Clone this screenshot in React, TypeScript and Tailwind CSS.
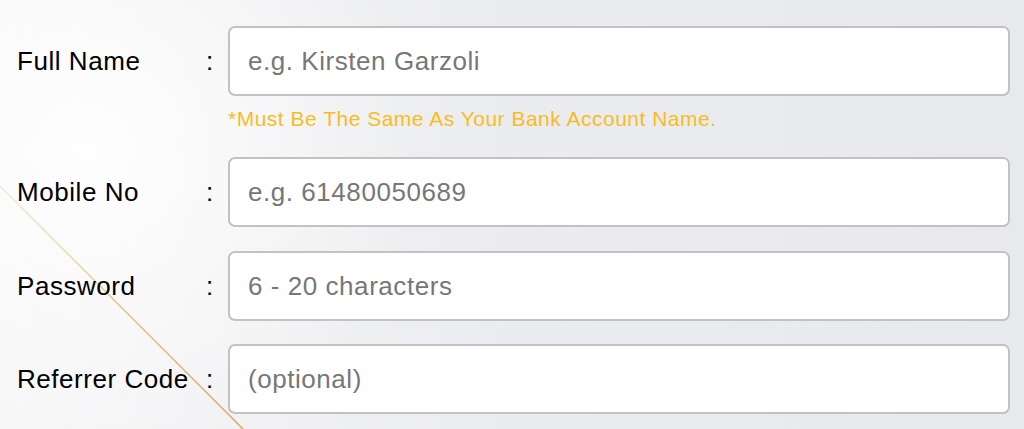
import React from "react";

type Field = { label: string; placeholder: string; type?: string; hint?: string };

const fields: Field[] = [
  {
    label: "Full Name",
    placeholder: "e.g. Kirsten Garzoli",
    hint: "*Must Be The Same As Your Bank Account Name.",
  },
  { label: "Mobile No", placeholder: "e.g. 61480050689" },
  { label: "Password", placeholder: "6 - 20 characters", type: "password" },
  { label: "Referrer Code", placeholder: "(optional)" },
];

function Backdrop() {
  return (
    <svg
      className="pointer-events-none absolute inset-0 h-full w-full"
      viewBox="0 0 1024 429"
      preserveAspectRatio="none"
    >
      <defs>
        <linearGradient id="gold" x1="0" y1="185" x2="245" y2="429" gradientUnits="userSpaceOnUse">
          <stop offset="0" stopColor="#efe3c4" stopOpacity="0.6" />
          <stop offset="0.5" stopColor="#e2c690" />
          <stop offset="1" stopColor="#d6ac62" />
        </linearGradient>
        <radialGradient id="glow" cx="90" cy="150" r="330" gradientUnits="userSpaceOnUse">
          <stop offset="0" stopColor="#ffffff" stopOpacity="0.9" />
          <stop offset="1" stopColor="#ffffff" stopOpacity="0" />
        </radialGradient>
      </defs>
      <rect width="1024" height="429" fill="url(#glow)" />
      <line x1="0" y1="186" x2="243" y2="429" stroke="url(#gold)" strokeWidth="1.6" />
    </svg>
  );
}

export default function App() {
  return (
    <div
      className="relative h-[429px] w-[1024px] overflow-hidden bg-gradient-to-r from-[#f6f6f7] via-[#ebecef] to-[#e8e9ed] text-black"
      style={{ fontFamily: '"Liberation Sans", Arial, sans-serif' }}
    >
      <Backdrop />
      <form className="relative flex flex-col pl-[17px] pr-[14px] pt-[26px]">
        {fields.map((f, i) => (
          <div key={f.label} className={i === 0 ? "" : i === 1 ? "mt-[26px]" : i === 2 ? "mt-[24px]" : "mt-[23px]"}>
            <div className="flex items-center">
              <label className="w-[189px] whitespace-nowrap text-[26px] leading-none tracking-[0.55px]">{f.label}</label>
              <span className="w-[22px] text-[26px] leading-none">:</span>
              <input
                type={f.type ?? "text"}
                placeholder={f.placeholder}
                className="h-[70px] flex-1 rounded-[7px] border-2 border-[#c2c2c2] bg-white px-[18px] text-[26px] tracking-[0.55px] text-black outline-none placeholder:text-[#777777]"
              />
            </div>
            {f.hint && (
              <p className="ml-[211px] mt-[11px] h-[24px] text-[21px] leading-[24px] tracking-[0.5px] text-[#f7bd1e]">{f.hint}</p>
            )}
          </div>
        ))}
      </form>
    </div>
  );
}
